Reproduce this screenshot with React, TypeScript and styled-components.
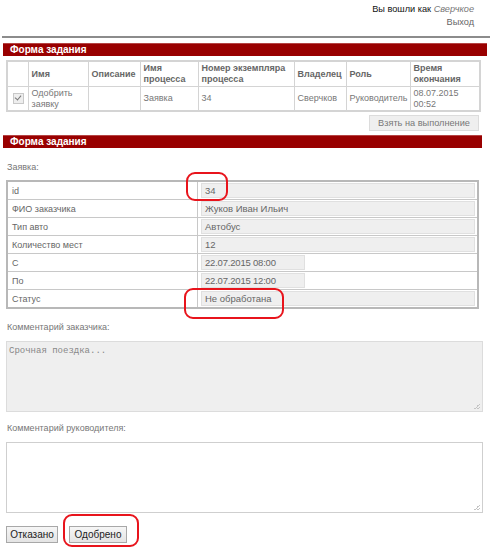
import React from "react";
import styled, { createGlobalStyle } from "styled-components";

const FONT = `"Liberation Sans", Arial, sans-serif`;

const Global = createGlobalStyle`
  html, body { margin: 0; padding: 0; background: #fff; }
  body { font-family: ${FONT}; font-size: 9px; color: #555; }
`;

const Page = styled.div`
  position: relative;
  width: 490px;
  height: 548px;
  overflow: hidden;
`;

const UserBar = styled.div`
  padding: 3px 16px 0 0;
  text-align: right;
  line-height: 13px;
  font-size: 9.2px;
  height: 32px;
  color: #111;
`;

const UserName = styled.span`
  font-style: italic;
  color: #777;
`;

const Logout = styled.div`
  color: #666;
`;

const Separator = styled.div`
  margin: 1px 0 0 2px;
  height: 2px;
  background: #8c8c8c;
`;

const SectionBar = styled.div<{ $right: number; $top: number }>`
  margin: ${(p) => p.$top}px ${(p) => p.$right}px 0 3px;
  height: 12px;
  background: #990000;
  border-top: 1px solid #b54444;
  color: #fff;
  font-weight: bold;
  font-size: 10px;
  line-height: 12px;
  padding-left: 7px;
`;

const TaskTable = styled.table`
  margin: 4px 0 0 6px;
  width: 473px;
  border-collapse: collapse;
  border: 2px solid #d4d4d4;
  table-layout: fixed;
  font-size: 9px;
  line-height: 11px;
  color: #777;
`;

const Th = styled.th`
  border: 1px solid #d4d4d4;
  text-align: left;
  font-weight: bold;
  font-size: 9px;
  color: #666;
  padding: 0 3px;
  height: 24px;
`;

const Td = styled.td`
  border: 1px solid #d4d4d4;
  font-size: 9px;
  padding: 0 3px;
  height: 23px;
`;

const Check = styled.span`
  display: inline-block;
  width: 9px;
  height: 9px;
  border: 1px solid #c8c8c8;
  background: #eee;
  position: relative;
  margin-left: 2px;
  vertical-align: middle;
  &::after {
    content: "";
    position: absolute;
    left: 2px;
    top: 0px;
    width: 3px;
    height: 5px;
    border: solid #777;
    border-width: 0 1.5px 1.5px 0;
    transform: rotate(40deg);
  }
`;

const TakeRow = styled.div`
  display: flex;
  justify-content: flex-end;
  padding: 3px 11px 0 0;
`;

const GrayButton = styled.button`
  width: 110px;
  height: 16px;
  border: 1px solid #dcdcdc;
  background: #efefef;
  color: #777;
  font-family: ${FONT};
  font-size: 9.2px;
  padding: 0;
  white-space: nowrap;
`;

const Caption = styled.div<{ $top: number }>`
  margin: ${(p) => p.$top}px 0 0 7px;
  color: #777;
  font-size: 9px;
  line-height: 12px;
`;

const FormTable = styled.table`
  margin: 7px 0 0 6px;
  width: 473px;
  border-collapse: collapse;
  border: 2px solid #b8b8b8;
  table-layout: fixed;
  color: #666;
`;

const LabelCell = styled.td`
  width: 185px;
  border: 1px solid #c8c8c8;
  padding: 0 0 0 4px;
  height: 17px;
  line-height: 14px;
  font-size: 9px;
`;

const ValueCell = styled.td`
  border: 1px solid #c8c8c8;
  padding: 1px 2px 1px 3px;
  height: 15px;
`;

const Field = styled.div<{ $short?: boolean }>`
  width: ${(p) => (p.$short ? "104px" : "auto")};
  height: 15px;
  background: #efefef;
  border: 1px solid #e0e0e0;
  box-sizing: border-box;
  padding-left: 3px;
  line-height: 14px;
  color: #666;
  font-size: 9.5px;
  letter-spacing: ${(p) => (p.$short ? "-0.2px" : "0")};
`;

const TextArea = styled.div<{ $filled?: boolean }>`
  margin: 8px 0 0 6px;
  width: 477px;
  height: 71px;
  box-sizing: border-box;
  border: 1px solid ${(p) => (p.$filled ? "#dcdcdc" : "#cfcfcf")};
  background: ${(p) => (p.$filled ? "#efefef" : "#fff")};
  position: relative;
  font-family: "Liberation Mono", "Courier New", monospace;
  font-size: 9px;
  line-height: 12px;
  color: #888;
  padding: 3px 2px;
  &::after {
    content: "";
    position: absolute;
    right: 2px;
    bottom: 2px;
    width: 6px;
    height: 6px;
    background: linear-gradient(135deg, transparent 50%, #c4c4c4 50%, #c4c4c4 60%, transparent 60%, transparent 75%, #c4c4c4 75%, #c4c4c4 85%, transparent 85%);
  }
`;

const Actions = styled.div`
  display: flex;
  gap: 11px;
  margin: 13px 0 0 6px;
`;

const ActionButton = styled.button<{ $w: number }>`
  width: ${(p) => p.$w}px;
  height: 17px;
  padding: 0;
  border: 1px solid #a8a8a8;
  background: linear-gradient(#f6f6f6, #e4e4e4);
  color: #222;
  font-family: ${FONT};
  font-size: 10px;
  line-height: 15px;
`;

const Mark = styled.div<{ $x: number; $y: number; $w: number; $h: number }>`
  position: absolute;
  left: ${(p) => p.$x}px;
  top: ${(p) => p.$y}px;
  width: ${(p) => p.$w}px;
  height: ${(p) => p.$h}px;
  box-sizing: border-box;
  border: 2.5px solid #e8141c;
  border-radius: 9px;
  pointer-events: none;
`;

const rows: { label: string; value: string; short?: boolean }[] = [
  { label: "id", value: "34" },
  { label: "ФИО заказчика", value: "Жуков Иван Ильич" },
  { label: "Тип авто", value: "Автобус" },
  { label: "Количество мест", value: "12" },
  { label: "С", value: "22.07.2015 08:00", short: true },
  { label: "По", value: "22.07.2015 12:00", short: true },
  { label: "Статус", value: "Не обработана" },
];

export default function App() {
  return (
    <Page>
      <Global />
      <UserBar>
        Вы вошли как <UserName>Сверчкое</UserName>
        <Logout>Выход</Logout>
      </UserBar>
      <Separator />
      <SectionBar $right={3} $top={5}>Форма задания</SectionBar>
      <TaskTable>
        <colgroup>
          <col style={{ width: 21 }} />
          <col style={{ width: 60 }} />
          <col style={{ width: 52 }} />
          <col style={{ width: 58 }} />
          <col style={{ width: 96 }} />
          <col style={{ width: 52 }} />
          <col style={{ width: 64 }} />
          <col style={{ width: 70 }} />
        </colgroup>
        <thead>
          <tr>
            <Th />
            <Th>Имя</Th>
            <Th>Описание</Th>
            <Th>Имя процесса</Th>
            <Th>Номер экземпляра процесса</Th>
            <Th>Владелец</Th>
            <Th>Роль</Th>
            <Th>Время окончания</Th>
          </tr>
        </thead>
        <tbody>
          <tr>
            <Td><Check /></Td>
            <Td>Одобрить заявку</Td>
            <Td />
            <Td>Заявка</Td>
            <Td>34</Td>
            <Td>Сверчков</Td>
            <Td>Руководитель</Td>
            <Td>08.07.2015 00:52</Td>
          </tr>
        </tbody>
      </TaskTable>
      <TakeRow>
        <GrayButton>Взять на выполнение</GrayButton>
      </TakeRow>
      <SectionBar $right={8} $top={4}>Форма задания</SectionBar>
      <Caption $top={13}>Заявка:</Caption>
      <FormTable>
        <tbody>
          {rows.map((r) => (
            <tr key={r.label}>
              <LabelCell>{r.label}</LabelCell>
              <ValueCell>
                <Field $short={r.short}>{r.value}</Field>
              </ValueCell>
            </tr>
          ))}
        </tbody>
      </FormTable>
      <Caption $top={12}>Комментарий заказчика:</Caption>
      <TextArea $filled>Срочная поездка...</TextArea>
      <Caption $top={10}>Комментарий руководителя:</Caption>
      <TextArea />
      <Actions>
        <ActionButton $w={52}>Отказано</ActionButton>
        <ActionButton $w={58}>Одобрено</ActionButton>
      </Actions>
      <Mark $x={186} $y={172} $w={42} $h={29} />
      <Mark $x={184} $y={288} $w={100} $h={31} />
      <Mark $x={63} $y={514} $w={76} $h={33} />
    </Page>
  );
}
